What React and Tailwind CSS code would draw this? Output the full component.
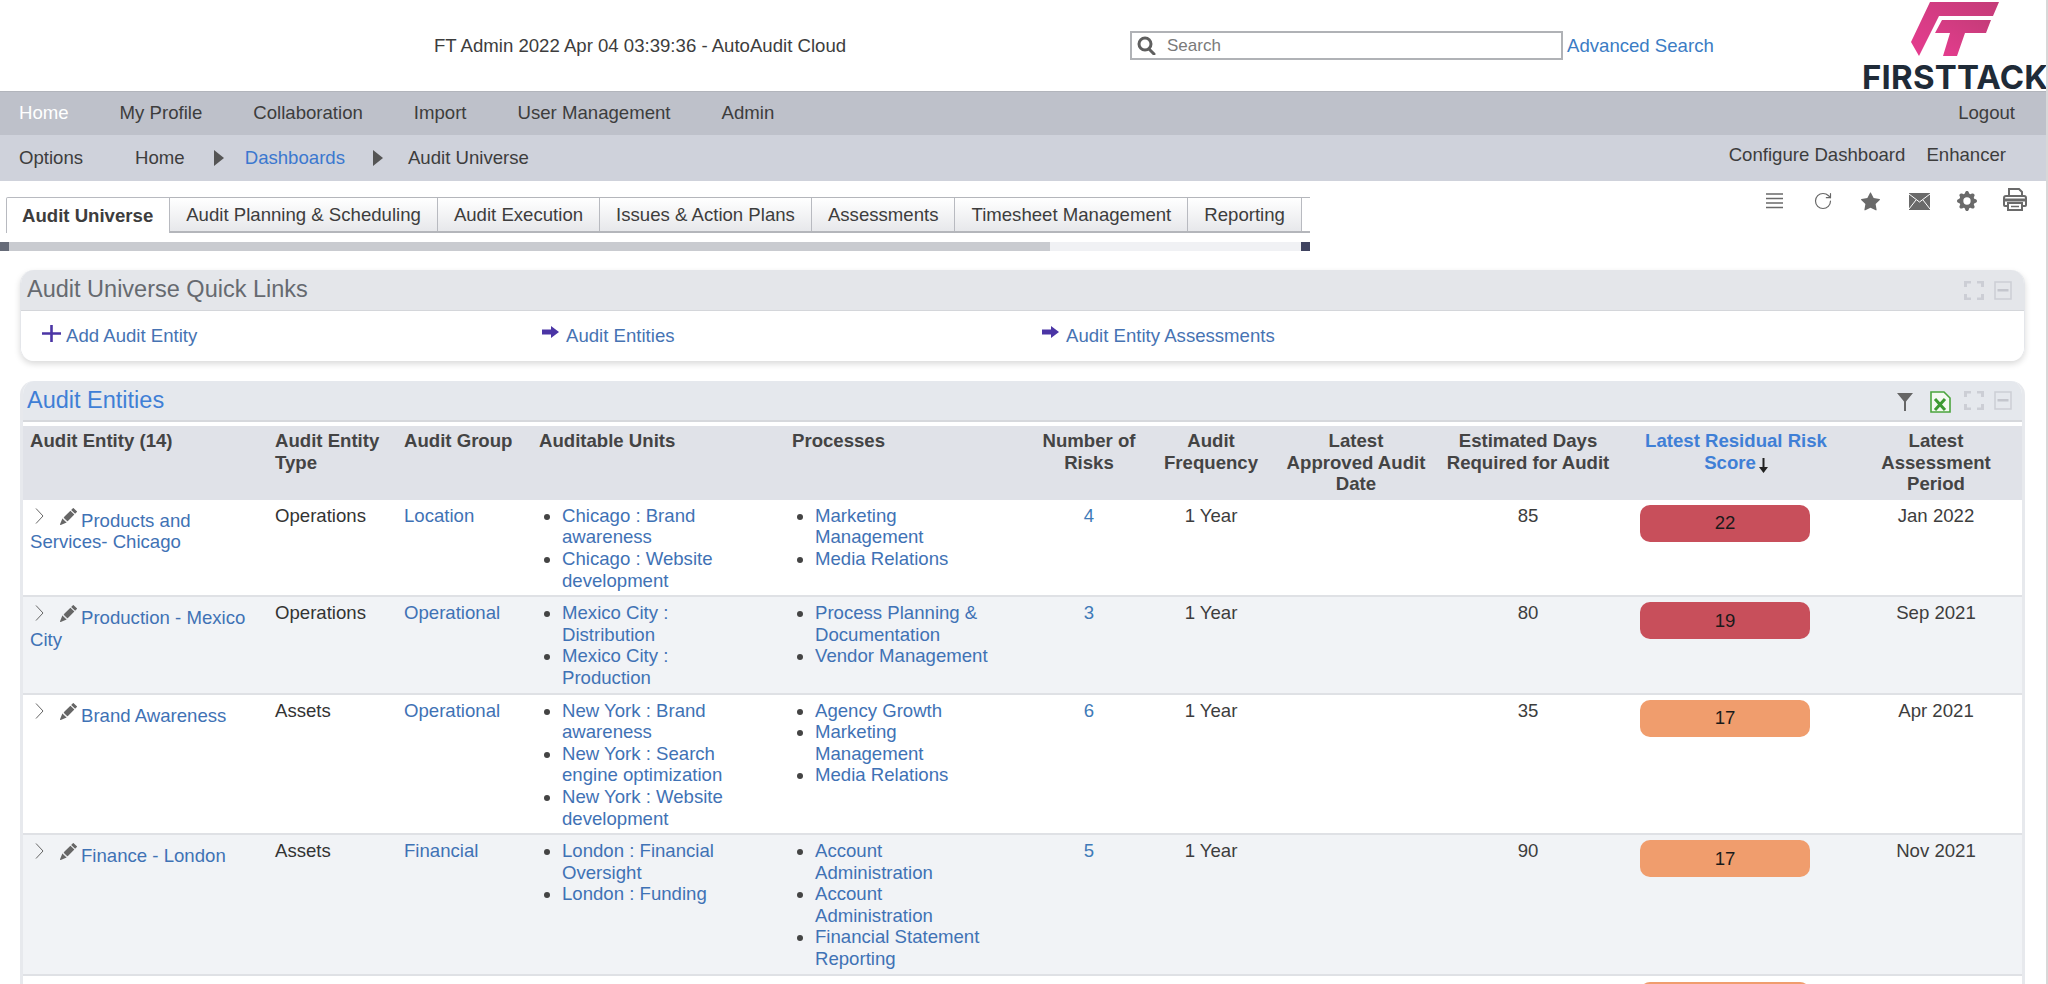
import { RotateCw } from 'lucide-react';
import { BsPencilFill, BsStarFill, BsGearFill } from 'react-icons/bs';

const font = 'font-["Liberation_Sans",Arial,sans-serif]';

const navItems = ['My Profile', 'Collaboration', 'Import', 'User Management', 'Admin'];
const tabs = ['Audit Planning & Scheduling', 'Audit Execution', 'Issues & Action Plans', 'Assessments', 'Timesheet Management', 'Reporting'];

const rows = [
  {
    name: 'Products and Services- Chicago', type: 'Operations', group: 'Location',
    units: ['Chicago : Brand awareness', 'Chicago : Website development'],
    processes: ['Marketing Management', 'Media Relations'],
    risks: 4, days: 85, score: 22, color: 'bg-[#c84f5b]', period: 'Jan 2022',
  },
  {
    name: 'Production - Mexico City', type: 'Operations', group: 'Operational',
    units: ['Mexico City : Distribution', 'Mexico City : Production'],
    processes: ['Process Planning & Documentation', 'Vendor Management'],
    risks: 3, days: 80, score: 19, color: 'bg-[#c84f5b]', period: 'Sep 2021',
  },
  {
    name: 'Brand Awareness', type: 'Assets', group: 'Operational',
    units: ['New York : Brand awareness', 'New York : Search engine optimization', 'New York : Website development'],
    processes: ['Agency Growth', 'Marketing Management', 'Media Relations'],
    risks: 6, days: 35, score: 17, color: 'bg-[#f09d6d]', period: 'Apr 2021',
  },
  {
    name: 'Finance - London', type: 'Assets', group: 'Financial',
    units: ['London : Financial Oversight', 'London : Funding'],
    processes: ['Account Administration', 'Account Administration', 'Financial Statement Reporting'],
    risks: 5, days: 90, score: 17, color: 'bg-[#f09d6d]', period: 'Nov 2021',
  },
];

const Caret = () => (
  <svg width="10" height="16" viewBox="0 0 10 16" className="shrink-0">
    <path d="M0 0 L10 8 L0 16 Z" fill="#555" />
  </svg>
);

const ExpandIcon = () => (
  <svg width="20" height="19" viewBox="0 0 20 19" fill="#ccced5">
    <path d="M0 0h7v2.500H3V6H0zM13 0h7v6h-3V2.500h-4zM0 13h3v3.500h4V19H0zM17 13h3v6h-7v-2.500h4z" />
  </svg>
);

const MinusIcon = () => (
  <svg width="18" height="19" viewBox="0 0 18 19" fill="none">
    <rect x="1" y="1" width="16" height="17" stroke="#ccced5" strokeWidth="1.500" />
    <rect x="3.500" y="8" width="11" height="2.500" fill="#c4c6cd" />
  </svg>
);

const Arrow = () => (
  <svg width="17" height="12" viewBox="0 0 17 12" className="shrink-0 mt-[-8px]">
    <path d="M0 3.500h9V0l8 6-8 6V8.500H0z" fill="#4b35a5" />
  </svg>
);

const Th = ({ className = '', children }) => (
  <th className={`pt-[4px] pb-[5px] px-[7px] align-top font-bold ${className}`}>{children}</th>
);

const BulletList = ({ items }) => (
  <ul className="list-disc pl-[23px] max-w-[212px]">
    {items.map((item, i) => (
      <li key={i} className="marker:text-[#444]">
        <a className="text-[#3f72b5]">{item}</a>
      </li>
    ))}
  </ul>
);

export default function App() {
  return (
    <div className={`${font} h-[984px] overflow-hidden bg-white border-r-2 border-[#d8d8d8] text-[18.6px] leading-[21.6px] text-[#3d3d3d]`}>
      {/* top header */}
      <header className="relative flex items-center h-[91px]">
        <div className="w-[1130px] pl-[434px]">FT Admin 2022 Apr 04 03:39:36 - AutoAudit Cloud</div>
        <div className="flex items-center gap-[10px] w-[433px] h-[29px] border-2 border-[#b0b2b6] pl-[4px] text-[17px] text-[#7a7a7a]">
          <svg width="21" height="19" viewBox="0 0 21 19" fill="none" stroke="#5f5f5f" strokeWidth="3">
            <circle cx="9" cy="8" r="6" />
            <path d="M13 13l5 5" strokeLinecap="round" />
          </svg>
          Search
        </div>
        <a className="ml-1 text-[#3b7cc4]">Advanced Search</a>
        <div className="absolute right-0 top-0 w-[184px]">
          <svg width="100" height="58" viewBox="0 0 100 58" className="absolute left-[38px] top-0">
            <defs>
              <linearGradient id="ftPink" x1="0" y1="1" x2="1" y2="0">
                <stop offset="0" stopColor="#e63c8f" />
                <stop offset="1" stopColor="#c43c78" />
              </linearGradient>
            </defs>
            <path d="M30 2 H99 L93 16 H39 L19 56 L11 42 Z" fill="url(#ftPink)" />
            <path d="M42 20 H91 L86 33 H65 L57 56 H43 L50 33 H35 Z" fill="url(#ftPink)" />
          </svg>
          <div className='absolute top-[58px] left-0 font-["Inter",sans-serif] font-bold text-[33px] leading-[38px] tracking-[0.2px] text-[#1f2b38] whitespace-nowrap'>FIRSTTACK</div>
        </div>
      </header>

      {/* main nav */}
      <nav className="flex items-center justify-between h-[44px] pl-[19px] pr-[31px] pb-[2px] bg-[#bec1ca] border-t border-[#b2b5bc]">
        <div className="flex gap-[51px]">
          <a className="text-white">Home</a>
          {navItems.map((item) => <a key={item}>{item}</a>)}
        </div>
        <a>Logout</a>
      </nav>

      {/* breadcrumb */}
      <div className="flex items-center justify-between h-[46px] pl-[19px] pr-[40px] bg-[#cfd2db]">
        <div className="flex items-center">
          <span className="mr-[52px]">Options</span>
          <span>Home</span>
          <span className="ml-[29px] mr-[21px]"><Caret /></span>
          <a className="text-[#3b78cf]">Dashboards</a>
          <span className="ml-[28px] mr-[25px]"><Caret /></span>
          <span>Audit Universe</span>
        </div>
        <div className="flex gap-[21px] mb-[6px]">
          <a>Configure Dashboard</a>
          <a>Enhancer</a>
        </div>
      </div>

      {/* tabs */}
      <div className="relative h-[89px]">
        <div className="flex items-stretch h-[36px] mt-[16px] ml-[6px] w-[1304px] absolute top-0 left-0">
          <div className="flex items-center pl-[15px] pr-[16px] font-bold bg-white border-l border-t border-r border-[#b8bac0] rounded-tl-[2px]">Audit Universe</div>
          <div className="flex flex-1 border-t border-b-2 border-[#b4b6bb]">
            {tabs.map((tab) => (
              <div key={tab} className="flex items-center px-[16px] border-r border-[#b8bac0] bg-gradient-to-b from-white to-[#e7e8eb] whitespace-nowrap">{tab}</div>
            ))}
          </div>
        </div>
        <div className="absolute top-[61px] left-0 flex h-[9px] w-[1310px] bg-[#f0f1f4]">
          <div className="w-[9px] bg-[#666b78]" />
          <div className="w-[1041px] bg-[#c9cbd0]" />
          <div className="flex-1" />
          <div className="w-[9px] bg-[#3f4360]" />
        </div>
        {/* toolbar icons */}
        <div className="absolute top-[10px] right-[19px] flex items-center text-[#6a6a6a]">
          <svg width="17" height="16" viewBox="0 0 17 16" stroke="#6a6a6a" strokeWidth="1.500">
            <path d="M0 1h17M0 5.500h17M0 10h17M0 14.500h17" />
          </svg>
          <RotateCw size={20} strokeWidth={1.400} className="ml-[30px] text-[#666]" />
          <BsStarFill size={19} className="ml-[28px]" />
          <svg width="21" height="17" viewBox="0 0 21 17" className="ml-[29px]">
            <rect width="21" height="17" fill="#6a6a6a" />
            <path d="M0 1l10.500 8L21 1M0 16l7-9M21 16l-7-9" stroke="#fff" strokeWidth="1" fill="none" />
          </svg>
          <BsGearFill size={20} className="ml-[27px]" />
          <svg width="24" height="23" viewBox="0 0 24 23" fill="none" stroke="#6a6a6a" strokeWidth="2" className="ml-[26px] mt-[-3px]">
            <path d="M6 8V1h10l3 3v4" />
            <path d="M5 18H2a1 1 0 0 1-1-1V10a2 2 0 0 1 2-2h18a2 2 0 0 1 2 2v7a1 1 0 0 1-1 1h-3" />
            <path d="M1 12h22" strokeWidth="3" />
            <rect x="5" y="15" width="14" height="7" fill="#fff" />
            <path d="M8 18.500h8" strokeWidth="1.500" />
          </svg>
        </div>
      </div>

      {/* quick links panel */}
      <section className="mx-[20px] w-[2005px] rounded-[14px] shadow-[0_3px_6px_rgba(0,0,0,0.15)] border-x border-[#e4e6ea] overflow-hidden">
        <div className="flex items-center justify-between h-[41px] pl-[6px] pr-[12px] bg-[#e4e6ea] border-b border-[#d4d6da]">
          <h2 className="text-[23.5px] text-[#666a70]">Audit Universe Quick Links</h2>
          <div className="flex gap-[10px]"><ExpandIcon /><MinusIcon /></div>
        </div>
        <div className="grid grid-cols-[500px_500px_1fr] h-[50px] pl-[21px] items-center bg-white text-[#4673b3]">
          <a className="flex items-center gap-[5px]">
            <svg width="19" height="17" viewBox="0 0 19 17" className="mt-[-6px]">
              <path d="M8.200 0h2.600v7.200H19v2.600h-8.200V17H8.200V9.800H0V7.200h8.200z" fill="#4b35a5" />
            </svg>
            Add Audit Entity
          </a>
          <a className="flex items-center gap-[7px]"><Arrow />Audit Entities</a>
          <a className="flex items-center gap-[7px]"><Arrow />Audit Entity Assessments</a>
        </div>
      </section>

      {/* audit entities panel */}
      <section className="mt-[20px] mx-[20px] w-[2005px] rounded-t-[14px] border-x-[3px] border-[#e7e9ed] overflow-hidden">
        <div className="flex items-center justify-between h-[41px] pl-[4px] pr-[10px] bg-[#e5e8ed] border-b-2 border-[#d6d8dc]">
          <h2 className="text-[23.5px] text-[#3f7fd6]">Audit Entities</h2>
          <div className="flex items-center">
            <svg width="16" height="18" viewBox="0 0 16 18" className="mt-[2px]">
              <path d="M0 0h16L9 8.500V18H7V8.500z" fill="#666" />
            </svg>
            <svg width="21" height="22" viewBox="0 0 21 22" className="ml-[17px] mt-[2px]">
              <path d="M1 1h13l6 6v14H1z" fill="#f4f9f2" stroke="#4aa43c" strokeWidth="1.600" />
              <path d="M5 8l10 11M15 8L5 19" stroke="#3d9a32" strokeWidth="3" />
            </svg>
            <span className="ml-[13px]"><ExpandIcon /></span>
            <span className="ml-[10px]"><MinusIcon /></span>
          </div>
        </div>
        <div className="pt-[4px] bg-white">
          <table className="w-full table-fixed border-collapse">
            <colgroup>
              <col className="w-[245px]" />
              <col className="w-[129px]" />
              <col className="w-[135px]" />
              <col className="w-[253px]" />
              <col className="w-[249px]" />
              <col className="w-[110px]" />
              <col className="w-[134px]" />
              <col className="w-[156px]" />
              <col className="w-[188px]" />
              <col className="w-[228px]" />
              <col />
            </colgroup>
            <thead className="bg-[#e0e2e8] text-[#444]">
              <tr>
                <Th className="text-left">Audit Entity (14)</Th>
                <Th className="text-left">Audit Entity Type</Th>
                <Th className="text-left">Audit Group</Th>
                <Th className="text-left">Auditable Units</Th>
                <Th className="text-left">Processes</Th>
                <Th className="text-center">Number of Risks</Th>
                <Th className="text-center">Audit Frequency</Th>
                <Th className="text-center">Latest Approved Audit Date</Th>
                <Th className="text-center">Estimated Days Required for Audit</Th>
                <Th className="text-center text-[#3f7fd6]">
                  Latest Residual Risk Score
                  <svg width="9" height="15" viewBox="0 0 9 15" className="inline-block ml-[3px] align-[-4px]">
                    <path d="M3.500 0h2v9H9l-4.500 6L0 9h3.500z" fill="#222" />
                  </svg>
                </Th>
                <Th className="text-center">Latest Assessment Period</Th>
              </tr>
            </thead>
            <tbody>
              {rows.map((row, i) => (
                <tr key={row.name} className={`border-b-2 border-[#dfe1e5] ${i % 2 ? 'bg-[#f1f3f6]' : 'bg-white'}`}>
                  <td className="px-[7px] pt-[8px] pb-[4px] align-top">
                    <svg width="9" height="16" viewBox="0 0 9 16" fill="none" stroke="#666" strokeWidth="1" className="inline-block ml-[5px] align-[3px]">
                      <path d="M1 0.500l7 7.500-7 7.500" />
                    </svg>
                    <BsPencilFill size={17} className="inline-block text-[#666] ml-[16px] mr-[4px] align-[2px]" />
                    <a className="text-[#3f72b5]">{row.name}</a>
                  </td>
                  <td className="px-[7px] pt-[5px] pb-[4px] align-top text-[#333]">{row.type}</td>
                  <td className="px-[7px] pt-[5px] pb-[4px] align-top"><a className="text-[#3f72b5]">{row.group}</a></td>
                  <td className="px-[7px] pt-[5px] pb-[4px] align-top"><BulletList items={row.units} /></td>
                  <td className="px-[7px] pt-[5px] pb-[4px] align-top"><BulletList items={row.processes} /></td>
                  <td className="pt-[5px] pb-[4px] align-top text-center"><a className="text-[#3f7ab8]">{row.risks}</a></td>
                  <td className="pt-[5px] pb-[4px] align-top text-center">1 Year</td>
                  <td className="pt-[5px] pb-[4px] align-top text-center"></td>
                  <td className="pt-[5px] pb-[4px] align-top text-center">{row.days}</td>
                  <td className="pt-[5px] pb-[4px] align-top pl-[18px]">
                    <div className={`flex items-center justify-center w-[170px] h-[37px] rounded-[10px] text-[#1a1a1a] ${row.color}`}>{row.score}</div>
                  </td>
                  <td className="pt-[5px] pb-[4px] align-top text-center">{row.period}</td>
                </tr>
              ))}
              <tr className="bg-white">
                <td colSpan={9} />
                <td className="pt-[6px] pl-[18px] align-top">
                  <div className="w-[170px] h-[37px] rounded-[10px] bg-[#f09d6d]" />
                </td>
                <td />
              </tr>
            </tbody>
          </table>
        </div>
      </section>
    </div>
  );
}
